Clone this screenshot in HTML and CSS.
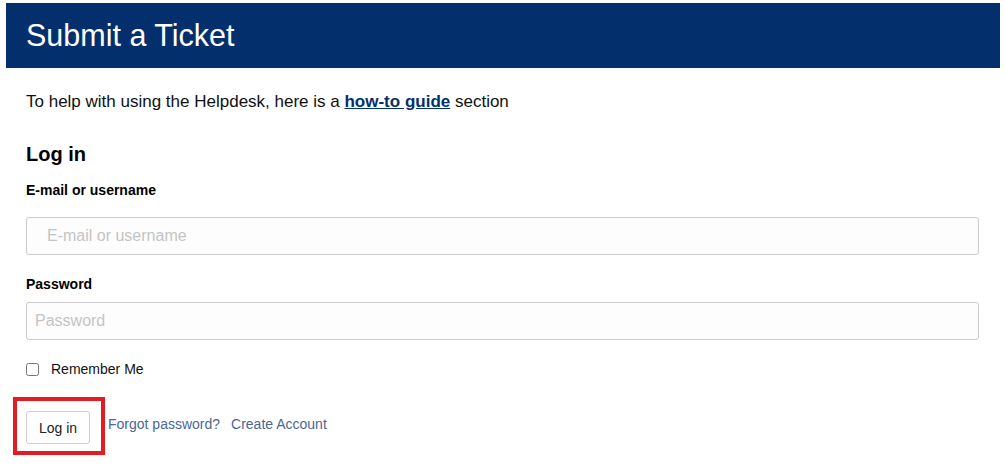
FILE: index.html
```html
<!DOCTYPE html>
<html>
<head>
<meta charset="utf-8">
<link rel="stylesheet" href="styles.css">
</head>
<body>
<div class="page">
  <header class="banner"><h1 class="title">Submit a Ticket</h1></header>
  <main class="content">
    <p class="intro">To help with using the Helpdesk, here is a <a class="guide" href="#">how-to guide</a> section</p>
    <h2 class="heading">Log in</h2>
    <form class="form">
      <label class="label">E-mail or username</label>
      <input class="field field-wide" type="text" placeholder="E-mail or username">
      <label class="label label-pw">Password</label>
      <input class="field field-pw" type="password" placeholder="Password">
      <label class="remember"><input class="check" type="checkbox"><span>Remember Me</span></label>
      <div class="actions">
        <span class="btn-wrap"><button class="btn" type="button">Log in</button></span>
        <a class="link" href="#">Forgot password?</a>
        <a class="link" href="#">Create Account</a>
      </div>
    </form>
  </main>
</div>
</body>
</html>
```
FILE: styles.css
```css
html, body {
  margin: 0;
  padding: 0;
  background: #fff;
  height: 100%;
}
body {
  font-family: "Liberation Sans", Arial, sans-serif;
  color: #111;
  overflow: hidden;
}
.page {
  box-sizing: border-box;
  min-height: 100%;
  padding: 3px 5px 0 6px;
}
.banner {
  background: #03306d;
  height: 65px;
  display: flex;
  align-items: center;
  padding: 0 20px;
}
.title {
  margin: 0;
  color: #fff;
  font-weight: normal;
  font-size: 30.5px;
  line-height: 1;
  padding-bottom: 1px;
}
.content {
  padding: 0 21px 0 20px;
}
.intro {
  margin: 24px 0 0;
  font-size: 17px;
  line-height: 20px;
}
.guide {
  color: #03306d;
  font-weight: bold;
}
.heading {
  margin: 30px 0 0;
  font-size: 20px;
  line-height: 24px;
  font-weight: bold;
  color: #000;
}
.form {
  display: flex;
  flex-direction: column;
  align-items: flex-start;
}
.label {
  margin-top: 16px;
  font-size: 14px;
  line-height: 17px;
  font-weight: bold;
  color: #000;
}
.label-pw {
  margin-top: 21px;
}
.field {
  box-sizing: border-box;
  width: 100%;
  height: 38px;
  margin-top: 18px;
  border: 1px solid #cbcbcb;
  border-radius: 3px;
  background: #fdfdfd;
  padding: 0 8px;
  font-family: "Liberation Sans", Arial, sans-serif;
  font-size: 16px;
  color: #333;
}
.field-wide {
  padding-left: 20px;
}
.field-pw {
  margin-top: 9px;
}
.field::placeholder {
  color: #c4c4c4;
}
.remember {
  margin-top: 20px;
  display: flex;
  align-items: center;
  font-size: 14px;
  line-height: 18px;
  color: #111;
}
.check {
  margin: 0 12px 0 0;
  width: 13px;
  height: 13px;
}
.actions {
  margin-top: 33px;
  display: flex;
  align-items: center;
}
.btn-wrap {
  position: relative;
  display: inline-block;
  margin-right: 18px;
}
.btn-wrap::after {
  content: "";
  position: absolute;
  left: -13px;
  right: -15px;
  top: -14px;
  bottom: -11px;
  border: 4px solid #e31b23;
  pointer-events: none;
}
.btn {
  display: block;
  box-sizing: border-box;
  height: 33px;
  width: 64px;
  background: #fff;
  border: 1px solid #cfcfcf;
  border-radius: 3px;
  font-family: "Liberation Sans", Arial, sans-serif;
  font-size: 14px;
  color: #222;
  padding: 0;
}
.link {
  color: #4a6797;
  font-size: 14px;
  text-decoration: none;
  line-height: 18px;
  margin-right: 11px;
  margin-bottom: 7px;
}
```
